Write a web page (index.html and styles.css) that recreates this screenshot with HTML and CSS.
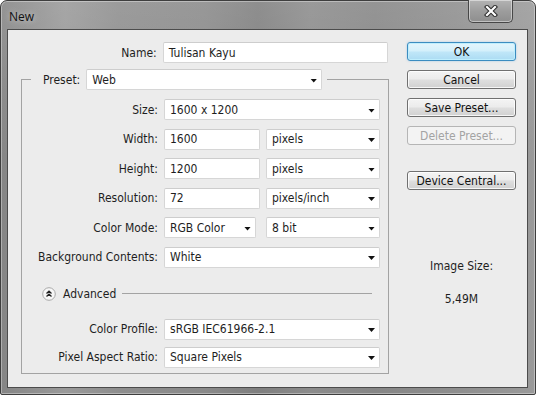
FILE: index.html
```html
<!DOCTYPE html>
<html>
<head>
<meta charset="utf-8">
<link rel="stylesheet" href="styles.css">
</head>
<body>
<div class="window">
  <div class="titlebar">
    <span class="title">New</span>
    <div class="close">
      <svg width="14" height="12" viewBox="0 0 14 12">
        <path d="M3 2 L11 10 M11 2 L3 10" stroke="#2c2c2c" stroke-width="4.2" stroke-linecap="square"/>
        <path d="M3 2 L11 10 M11 2 L3 10" stroke="#ffffff" stroke-width="2.2" stroke-linecap="square"/>
      </svg>
    </div>
  </div>
  <div class="client">
    <div class="form">
      <div class="row name-row">
        <span class="lbl lbl-name">Name:</span>
        <div class="field w-name">Tulisan Kayu</div>
      </div>
      <fieldset class="group">
        <legend class="legend">
          <span class="legend-lbl">Preset:</span>
          <div class="field select w-preset">Web<span class="arrow"></span></div>
        </legend>
        <div class="rows">
          <div class="row">
            <span class="lbl">Size:</span>
            <div class="field select w-full">1600 x 1200<span class="arrow"></span></div>
          </div>
          <div class="row">
            <span class="lbl">Width:</span>
            <div class="field w-num">1600</div>
            <div class="field select w-unit">pixels<span class="arrow"></span></div>
          </div>
          <div class="row">
            <span class="lbl">Height:</span>
            <div class="field w-num">1200</div>
            <div class="field select w-unit">pixels<span class="arrow"></span></div>
          </div>
          <div class="row">
            <span class="lbl">Resolution:</span>
            <div class="field w-num">72</div>
            <div class="field select w-unit">pixels/inch<span class="arrow"></span></div>
          </div>
          <div class="row">
            <span class="lbl">Color Mode:</span>
            <div class="field select w-mode">RGB Color<span class="arrow"></span></div>
            <div class="field select w-unit gap-wide">8 bit<span class="arrow"></span></div>
          </div>
          <div class="row">
            <span class="lbl">Background Contents:</span>
            <div class="field select w-full">White<span class="arrow"></span></div>
          </div>
        </div>
        <div class="advanced">
          <svg class="adv-icon" width="14" height="14" viewBox="0 0 14 14">
            <circle cx="7" cy="7" r="6.3" fill="#f7f7f7" stroke="#a9a9a9" stroke-width="1"/>
            <path d="M4.5 6.5 L7 4.2 L9.5 6.5 M4.5 9.5 L7 7.2 L9.5 9.5" fill="none" stroke="#222" stroke-width="1.3"/>
          </svg>
          <span class="adv-text">Advanced</span>
          <span class="adv-line"></span>
        </div>
        <div class="rows rows-adv">
          <div class="row">
            <span class="lbl">Color Profile:</span>
            <div class="field select w-full">sRGB IEC61966-2.1<span class="arrow"></span></div>
          </div>
          <div class="row">
            <span class="lbl">Pixel Aspect Ratio:</span>
            <div class="field select w-full">Square Pixels<span class="arrow"></span></div>
          </div>
        </div>
      </fieldset>
    </div>
    <div class="side">
      <div class="btn btn-default">OK</div>
      <div class="btn">Cancel</div>
      <div class="btn">Save Preset...</div>
      <div class="btn btn-disabled">Delete Preset...</div>
      <div class="btn btn-device">Device Central...</div>
      <div class="info-lbl">Image Size:</div>
      <div class="info-val">5,49M</div>
    </div>
  </div>
</div>
</body>
</html>
```

FILE: styles.css
```css
html, body {
  margin: 0;
  padding: 0;
}
body {
  width: 536px;
  height: 395px;
  overflow: hidden;
  font-family: "DejaVu Sans", Verdana, sans-serif;
  font-stretch: condensed;
  font-size: 12px;
  color: #1e1e1e;
}
.window {
  box-sizing: border-box;
  width: 536px;
  height: 395px;
  border: 1px solid #3e3e3e;
  border-radius: 7px 7px 2px 2px;
  background:
    linear-gradient(180deg, rgba(255,255,255,0.12) 0%, rgba(255,255,255,0) 40%),
    linear-gradient(90deg, #858585 0%, #9a9a9a 12%, #8e8e8e 22%, #8a8a8a 38%, #7f7f7f 48%, #8c8c8c 58%, #868686 70%, #8e8e8e 85%, #9a9a9a 100%);
  display: flex;
  flex-direction: column;
  box-shadow: inset 0 0 0 1px rgba(255,255,255,0.35);
}
.titlebar {
  height: 28px;
  display: flex;
  align-items: flex-start;
  flex-shrink: 0;
}
.title {
  font-family: "Open Sans", "Noto Sans", sans-serif;
  font-stretch: normal;
  font-size: 12px;
  line-height: 15px;
  color: #111;
  padding: 8px 0 0 8px;
  text-shadow: 0 0 6px rgba(255,255,255,0.6);
}
.close {
  margin-left: auto;
  margin-right: 22px;
  margin-top: -1px;
  width: 45px;
  height: 23px;
  box-sizing: border-box;
  border: 1px solid #474747;
  border-top: none;
  border-radius: 0 0 5px 5px;
  background: linear-gradient(180deg, #b3b3b3 0%, #9d9d9d 50%, #8e8e8e 100%);
  box-shadow: inset 0 0 0 1px rgba(255,255,255,0.45);
  display: flex;
  align-items: center;
  justify-content: center;
  padding-bottom: 1px;
}
.client {
  flex: 1;
  margin: 0 7px 6px 6px;
  border: 1px solid #4c4c4c;
  background: #ececec;
  display: flex;
  align-items: flex-start;
}
.form {
  width: 380px;
  padding-top: 12px;
  display: flex;
  flex-direction: column;
}
.row {
  display: flex;
  align-items: center;
  height: 21px;
}
.lbl {
  width: 136px;
  text-align: right;
  margin-right: 6px;
  white-space: nowrap;
}
.lbl-name {
  width: 150px;
}
.field {
  box-sizing: border-box;
  height: 21px;
  background: #fff;
  border: 1px solid #d6d6d6;
  border-top-color: #cdcdcd;
  border-radius: 2px;
  padding: 0 4px 0 5px;
  display: flex;
  align-items: center;
  white-space: nowrap;
}
.select {
  justify-content: space-between;
}
.arrow {
  width: 7px;
  height: 4px;
  margin-top: 2px;
  background: #111;
  clip-path: polygon(0 0, 100% 0, 50% 100%);
  flex-shrink: 0;
}
.w-name { width: 227px; }
.w-preset { width: 236px; }
.w-full { width: 216px; }
.w-num { width: 96px; }
.w-unit { width: 114px; margin-left: 6px; }
.w-mode { width: 92px; }
.gap-wide { margin-left: 10px; }
.group {
  margin: 6px 0 0 13px;
  padding: 0 0 5px 0;
  width: 368px;
  box-sizing: border-box;
  border: 1px solid #a3a3a3;
  border-radius: 0;
  min-width: 0;
}
.legend {
  margin-left: 9px;
  padding: 0 5px 0 12px;
  display: flex;
  align-items: center;
}
.legend-lbl {
  margin-right: 6px;
}
.rows {
  margin-top: 9px;
  display: flex;
  flex-direction: column;
  gap: 8.5px;
}
.advanced {
  margin-top: 19px;
  height: 14px;
  display: flex;
  align-items: center;
  padding-left: 20px;
  margin-right: 16px;
}
.adv-icon {
  flex-shrink: 0;
}
.adv-text {
  margin-left: 7px;
}
.adv-line {
  flex: 1;
  height: 1px;
  background: #a3a3a3;
  margin-left: 6px;
}
.rows-adv {
  margin-top: 18px;
  gap: 7px;
}
.side {
  margin-left: 19px;
  padding-top: 12px;
  width: 109px;
  display: flex;
  flex-direction: column;
  gap: 9px;
}
.btn {
  box-sizing: border-box;
  height: 19px;
  border: 1px solid #707070;
  border-radius: 3px;
  background: linear-gradient(180deg, #f4f4f4 0%, #ececec 45%, #dedede 55%, #d1d1d1 100%);
  box-shadow: inset 0 0 0 1px rgba(255,255,255,0.8);
  display: flex;
  align-items: center;
  justify-content: center;
  color: #111;
  white-space: nowrap;
}
.btn-default {
  border-color: #3b8cc0;
  background: linear-gradient(180deg, #e3f5fc 0%, #d4f0fb 45%, #bfe6f8 55%, #abdcf3 100%);
  box-shadow: inset 0 0 0 1px #bfeefd, 0 0 2px rgba(80,170,230,0.5);
}
.btn-disabled {
  border-color: #b5b5b5;
  background: #f3f3f3;
  box-shadow: none;
  color: #a3a3a3;
}
.btn-device {
  margin-top: 17px;
}
.info-lbl {
  margin-top: 60px;
  text-align: center;
  line-height: 14px;
}
.info-val {
  margin-top: 10px;
  text-align: center;
  line-height: 14px;
}
```
